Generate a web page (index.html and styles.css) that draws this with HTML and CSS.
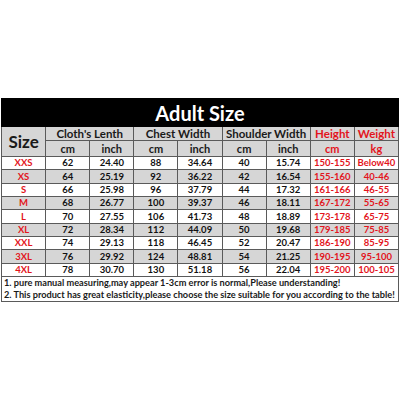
FILE: index.html
```html
<!DOCTYPE html>
<html>
<head>
<meta charset="utf-8">
<link rel="stylesheet" href="styles.css">
</head>
<body>
<table class="chart">
  <colgroup>
    <col><col><col><col><col><col><col><col><col>
  </colgroup>
  <tr class="title"><td colspan="9">Adult Size</td></tr>
  <tr class="head1 gray">
    <td rowspan="2" class="size-head">Size</td>
    <td colspan="2">Cloth's Lenth</td>
    <td colspan="2">Chest Width</td>
    <td colspan="2">Shoulder Width</td>
    <td class="red">Height</td>
    <td class="red">Weight</td>
  </tr>
  <tr class="head2 gray">
    <td>cm</td><td>inch</td><td>cm</td><td>inch</td><td>cm</td><td>inch</td><td class="red">cm</td><td class="red">kg</td>
  </tr>
  <tr class="row"><td class="red">XXS</td><td>62</td><td>24.40</td><td>88</td><td>34.64</td><td>40</td><td>15.74</td><td class="red">150-155</td><td class="red">Below40</td></tr>
  <tr class="row gray"><td class="red">XS</td><td>64</td><td>25.19</td><td>92</td><td>36.22</td><td>42</td><td>16.54</td><td class="red">155-160</td><td class="red">40-46</td></tr>
  <tr class="row"><td class="red">S</td><td>66</td><td>25.98</td><td>96</td><td>37.79</td><td>44</td><td>17.32</td><td class="red">161-166</td><td class="red">46-55</td></tr>
  <tr class="row gray"><td class="red">M</td><td>68</td><td>26.77</td><td>100</td><td>39.37</td><td>46</td><td>18.11</td><td class="red">167-172</td><td class="red">55-65</td></tr>
  <tr class="row"><td class="red">L</td><td>70</td><td>27.55</td><td>106</td><td>41.73</td><td>48</td><td>18.89</td><td class="red">173-178</td><td class="red">65-75</td></tr>
  <tr class="row gray"><td class="red">XL</td><td>72</td><td>28.34</td><td>112</td><td>44.09</td><td>50</td><td>19.68</td><td class="red">179-185</td><td class="red">75-85</td></tr>
  <tr class="row"><td class="red">XXL</td><td>74</td><td>29.13</td><td>118</td><td>46.45</td><td>52</td><td>20.47</td><td class="red">186-190</td><td class="red">85-95</td></tr>
  <tr class="row gray"><td class="red">3XL</td><td>76</td><td>29.92</td><td>124</td><td>48.81</td><td>54</td><td>21.25</td><td class="red">190-195</td><td class="red">95-100</td></tr>
  <tr class="row"><td class="red">4XL</td><td>78</td><td>30.70</td><td>130</td><td>51.18</td><td>56</td><td>22.04</td><td class="red">195-200</td><td class="red">100-105</td></tr>
  <tr class="notes"><td colspan="9">
    <div class="note">1. pure manual measuring,may appear 1-3cm error is normal,Please understanding!</div>
    <div class="note">2. This product has great elasticity,please choose the size suitable for you according to the table!</div>
  </td></tr>
</table>
</body>
</html>
```
FILE: styles.css
```css
html, body {
  margin: 0;
  padding: 0;
  background: #ffffff;
}
body {
  font-family: "Lato", "Liberation Sans", sans-serif;
  font-weight: 700;
  color: #1a1a1a;
}
.chart {
  margin: 98px 0 0 1px;
  width: 398px;
  table-layout: fixed;
  border-collapse: collapse;
  border: 1px solid #3a3a3a;
}
.chart td {
  border: 1px solid #5a5a5a;
  padding: 0;
  text-align: center;
  vertical-align: middle;
  white-space: nowrap;
  overflow: hidden;
  line-height: 1;
}
.title td {
  background: #000000;
  color: #ffffff;
  font-size: 20px;
  height: 27px;
  border-color: #000000;
}
.gray td {
  background: #d6d6d6;
}
.head1 td {
  height: 13px;
  font-size: 11.5px;
}
.head2 td {
  height: 15px;
  font-size: 11px;
}
.head1 .size-head {
  font-size: 17px;
}
.row td {
  height: 12.33px;
  font-size: 9.5px;
  color: #111111;
}
.chart .red {
  color: #e3141c;
}
.notes td {
  text-align: left;
  height: 24px;
  padding: 0 0 0 2px;
  background: #ffffff;
}
.note {
  font-size: 9.2px;
  line-height: 12px;
  white-space: nowrap;
}
```
